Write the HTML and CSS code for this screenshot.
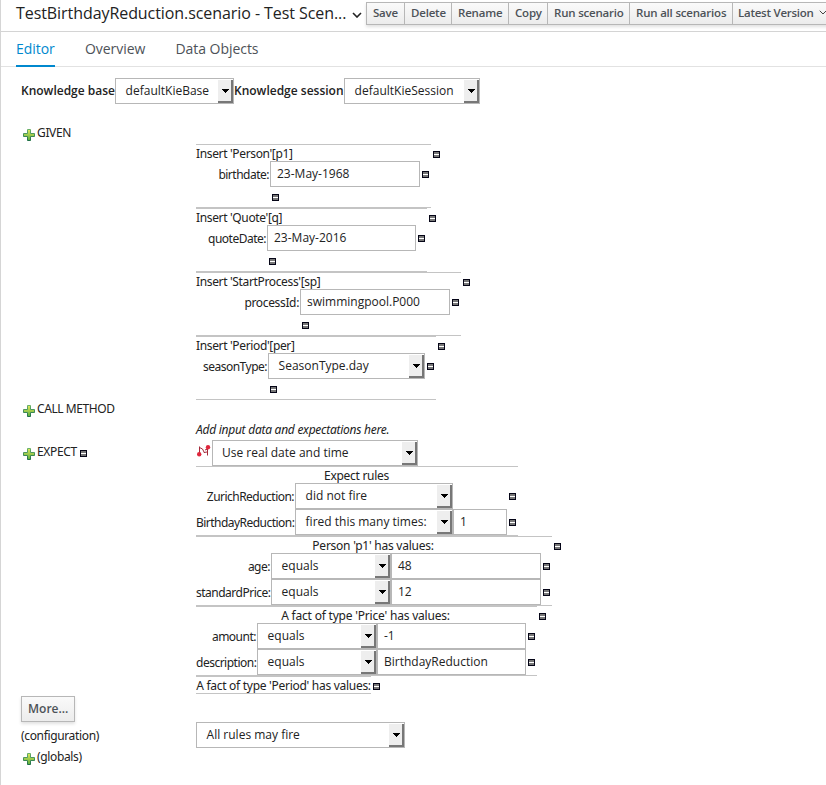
FILE: index.html
```html
<!DOCTYPE html>
<html lang="en">
<head>
<meta charset="utf-8">
<title>TestBirthdayReduction.scenario - Test Scenarios</title>
<link rel="stylesheet" href="styles.css">
</head>
<body>
<svg class="defs" aria-hidden="true">
  <defs>
    <linearGradient id="leaf" x1="0" y1="0" x2="0" y2="1"><stop offset="0" stop-color="#e4e85c"/><stop offset="1" stop-color="#58ad3c"/></linearGradient>
    <linearGradient id="edge" x1="0" y1="0" x2="0" y2="1"><stop offset="0" stop-color="#69b06a"/><stop offset="1" stop-color="#1f7048"/></linearGradient>
  </defs>
  <symbol id="plus" viewBox="0 0 12 12"><path d="M4.5 .5h3v4h4v3h-4v4h-3v-4h-4v-3h4z" fill="url(#leaf)" stroke="url(#edge)"/></symbol>
  <symbol id="minus" viewBox="0 0 7 7"><rect x=".5" y=".5" width="6" height="6" fill="#777" stroke="#050517"/><path d="M1 3.5h5" stroke="#fff"/></symbol>
  <symbol id="path" viewBox="0 0 15 12"><path d="M3.500 8V1.500M3.500 2.500l3 1.500 2 4M8 7.500l3-.5M11.500 3v7.500M9 5l2.500-1" fill="none" stroke="#a52a3a"/><circle cx="3.200" cy="9.300" r="2.200" fill="#e0263c"/><circle cx="12" cy="2.300" r="2.200" fill="#e0263c"/></symbol>
</svg>
<div class="page">
  <header class="bar">
    <h1 class="title">TestBirthdayReduction.scenario - Test Scen...</h1>
    <svg class="chev" viewBox="0 0 10 6"><path d="M1 1l4 4 4-4" fill="none" stroke="#222" stroke-width="1.600"/></svg>
    <div class="buttons">
      <span class="btn b1">Save</span><span class="btn b2">Delete</span><span class="btn b3">Rename</span><span class="btn b4">Copy</span><span class="btn b5">Run scenario</span><span class="btn b6">Run all scenarios</span><span class="btn b7">Latest Version<svg class="chev-s" viewBox="0 0 8 5"><path d="M.7.700l3.300 3.300 3.300-3.300" fill="none" stroke="#444"/></svg></span>
    </div>
  </header>
  <nav class="tabs"><span class="tab active">Editor</span><span class="tab t2">Overview</span><span class="tab t3">Data Objects</span></nav>
  <div class="kbar"><b class="kb">Knowledge base</b><span class="select s-base">defaultKieBase</span><b class="ks">Knowledge session</b><span class="select s-sess">defaultKieSession</span></div>

  <main class="form">
    <div class="cell given"><svg class="plus"><use href="#plus"/></svg><span>GIVEN</span></div><div></div>

    <div></div>
    <div>
      <section class="fact person"><div class="box">
        <div class="head">Insert 'Person'[p1]</div>
        <div class="row"><label>birthdate:</label><span class="input">23-May-1968</span><svg class="minus"><use href="#minus"/></svg></div>
        <div class="foot"><svg class="minus"><use href="#minus"/></svg></div>
      </div><svg class="minus"><use href="#minus"/></svg></section>
      <section class="fact quote"><div class="box">
        <div class="head">Insert 'Quote'[q]</div>
        <div class="row"><label>quoteDate:</label><span class="input">23-May-2016</span><svg class="minus"><use href="#minus"/></svg></div>
        <div class="foot"><svg class="minus"><use href="#minus"/></svg></div>
      </div><svg class="minus"><use href="#minus"/></svg></section>
      <section class="fact process"><div class="box">
        <div class="head">Insert 'StartProcess'[sp]</div>
        <div class="row"><label>processId:</label><span class="input">swimmingpool.P000</span><svg class="minus"><use href="#minus"/></svg></div>
        <div class="foot"><svg class="minus"><use href="#minus"/></svg></div>
      </div><svg class="minus"><use href="#minus"/></svg></section>
      <section class="fact period"><div class="box">
        <div class="head">Insert 'Period'[per]</div>
        <div class="row"><label>seasonType:</label><span class="select">SeasonType.day</span><svg class="minus"><use href="#minus"/></svg></div>
        <div class="foot"><svg class="minus"><use href="#minus"/></svg></div>
      </div><svg class="minus"><use href="#minus"/></svg></section>
    </div>

    <div class="cell call"><svg class="plus"><use href="#plus"/></svg><span>CALL METHOD</span></div><div></div>
    <div></div><div class="hint">Add input data and expectations here.</div>

    <div class="cell expect"><svg class="plus"><use href="#plus"/></svg><span>EXPECT</span><svg class="minus"><use href="#minus"/></svg></div>
    <div class="expectations">
      <div class="clock"><svg class="path"><use href="#path"/></svg><span class="select">Use real date and time</span></div>
      <section class="fact rules"><div class="box">
        <div class="head">Expect rules</div>
        <div class="row"><label>ZurichReduction:</label><span class="select">did not fire</span><span class="gap"></span><svg class="minus"><use href="#minus"/></svg></div>
        <div class="row"><label>BirthdayReduction:</label><span class="select">fired this many times:</span><span class="input">1</span><svg class="minus"><use href="#minus"/></svg></div>
      </div></section>
      <section class="fact values"><div class="box">
        <div class="head">Person 'p1' has values:</div>
        <div class="row"><label>age:</label><span class="select">equals</span><span class="input">48</span><svg class="minus"><use href="#minus"/></svg></div>
        <div class="row"><label>standardPrice:</label><span class="select">equals</span><span class="input">12</span><svg class="minus"><use href="#minus"/></svg></div>
      </div><svg class="minus"><use href="#minus"/></svg></section>
      <section class="fact price"><div class="box">
        <div class="head">A fact of type 'Price' has values:</div>
        <div class="row"><label>amount:</label><span class="select">equals</span><span class="input">-1</span><svg class="minus"><use href="#minus"/></svg></div>
        <div class="row"><label>description:</label><span class="select">equals</span><span class="input">BirthdayReduction</span><svg class="minus"><use href="#minus"/></svg></div>
      </div><svg class="minus"><use href="#minus"/></svg></section>
      <section class="fact empty"><div class="box"><div class="head">A fact of type 'Period' has values:</div></div><svg class="minus"><use href="#minus"/></svg></section>
    </div>

    <div class="more-row"><span class="more">More...</span></div><div></div>
    <div class="cell config">(configuration)</div><div class="firing"><span class="select">All rules may fire</span></div>
    <div class="cell globals"><svg class="plus"><use href="#plus"/></svg><span>(globals)</span></div><div></div>
  </main>
</div>
</body>
</html>
```
FILE: styles.css
```css
*, *::after { box-sizing: border-box; }
body { margin: 0; background: #fff; color: #222; font: 12px/16px "Noto Sans", "Open Sans", sans-serif; overflow: hidden; }
svg { display: block; flex: none; }
.defs { position: absolute; width: 0; height: 0; }
.page { height: 785px; border-left: 1px solid #d5d5d5; overflow: hidden; white-space: nowrap; font-family: "Open Sans", sans-serif; }

.bar { display: flex; height: 32px; border-bottom: 1px solid #d4d4d4; padding-left: 15px; }
.title { margin: 0; width: 336px; flex: none; font-size: 16px; line-height: 27px; font-weight: 400; letter-spacing: -.07px; color: #222; }
.chev { width: 10px; height: 6px; margin-top: 12px; }
.buttons { display: flex; height: 23px; margin: 2px 0 0 4px; box-shadow: 0 2px 3px rgba(0,0,0,.12); }
.btn { flex: none; display: flex; align-items: center; border: 1px solid #b7b7b7; border-right: 0; background: linear-gradient(#fafafa, #ececec); font-size: 11.5px; line-height: 15px; font-weight: 600; letter-spacing: -.2px; color: #4d5258; padding: 0 0 2px 6px; }
.b1 { width: 38px; } .b2 { width: 47px; } .b3 { width: 57px; } .b4 { width: 39px; } .b5 { width: 82px; } .b6 { width: 103px; } .b7 { width: 105px; padding-left: 5px; letter-spacing: -.25px; }
.chev-s { width: 8px; height: 5px; margin-left: 5px; }

.tabs { display: flex; height: 35px; padding-left: 15px; border-bottom: 1px solid #e2e2e2; font-size: 14px; line-height: 34px; letter-spacing: -.05px; color: #4d5258; }
.tab { width: 39px; height: 35px; }
.active { color: #0088ce; border-bottom: 2px solid #0088ce; }
.t2 { margin-left: 30px; width: 61px; }
.t3 { margin-left: 29.5px; width: 83px; }

.kbar { display: flex; align-items: center; height: 26px; margin: 11px 0 0 20px; }
.kbar b { font-weight: 600; font-size: 12px; }
.kb { width: 94px; } .ks { width: 110px; }
.s-base { width: 119px; } .s-sess { width: 136px; }

.select, .input { flex: none; height: 26px; border: 1px solid #b7b7b7; background: #fff; font-size: 12px; line-height: 23px; }
.input { padding-left: 6px; width: 150px; }
.select { display: flex; justify-content: space-between; padding-left: 9px; text-indent: .6px; }
.select::after { content: ""; flex: none; width: 15px; height: 23px; margin-top: 1px; border-right: 2px solid #777; border-bottom: 2px solid #777; background: linear-gradient(#000, #000) 4px 9px / 7px 1px no-repeat, linear-gradient(#000, #000) 5px 10px / 5px 1px no-repeat, linear-gradient(#000, #000) 6px 11px / 3px 1px no-repeat, linear-gradient(#000, #000) 7px 12px / 1px 1px no-repeat, #eee; }

.form { display: grid; grid-template-columns: 175px 1fr; margin: 20px 0 0 20px; }
.cell { font-family: "Noto Sans", sans-serif; display: flex; align-items: flex-start; letter-spacing: -.35px; }
.plus { width: 12px; height: 12px; margin: 5px 2px 0; }
.minus { width: 7px; height: 7px; }
.given { height: 20px; }
.given span, .expect span { margin-top: 1px; }
.call { height: 20px; padding-top: 1px; letter-spacing: -.43px; }
.call .plus { margin-top: 4px; }
.hint { font-family: "Noto Sans", sans-serif; height: 20px; padding-top: 2px; font-style: italic; letter-spacing: -.26px; }
.expect { padding-top: 3px; }
.expect .minus { margin: 7px 0 0 3px; }

.fact { display: flex; font-family: "Noto Sans", sans-serif; letter-spacing: -.35px; }
.box { flex: none; border: solid #c4c4c4; border-width: 1px 0; }
.fact > .minus { margin: 7px 0 0 2px; }
.head { height: 16px; line-height: 17px; }
.row { display: flex; height: 26px; align-items: center; }
.row label { flex: none; text-align: right; padding: 2px 1px 0 0; letter-spacing: -.5px; }
.row .select, .row .input { font-family: "Open Sans", sans-serif; letter-spacing: 0; }
.row .minus { margin-left: 2px; }
.foot { height: 20px; padding-top: 7px; }
.person .box { width: 235px; } .person label { width: 74px; } .person .foot { padding-left: 76px; }
.quote .box { width: 231px; } .quote label { width: 71px; } .quote .foot { padding-left: 73px; } .quote .input { width: 149px; }
.process .box { width: 265px; } .process label { width: 104px; letter-spacing: -.35px; } .process .foot { padding-left: 106px; }
.period .box { width: 240px; } .period label { width: 72px; } .period .foot { padding-left: 74px; } .period .select { width: 157px; }

.clock { display: flex; height: 26px; }
.path { width: 15px; height: 12px; margin: 5px 1px 0 0; }
.clock .select { width: 206px; text-indent: 0; }
.expectations .head { text-align: center; }
.rules .box { width: 322px; } .rules label { width: 99px; letter-spacing: -.53px; } .rules .select { width: 158px; } .rules .input, .gap { width: 54px; flex: none; }
.values .box { width: 356px; } .values .head { letter-spacing: -.25px; padding-right: 2px; } .values label { width: 75px; } .values .select { width: 120px; }
.price .box { width: 341px; } .price .head { letter-spacing: -.2px; padding-right: 2px; } .price label { width: 61px; } .price .select { width: 120px; } .price .input { width: 149px; }
.empty .box { width: 175px; } .empty .head { letter-spacing: -.28px; }
.rules .head { letter-spacing: -.3px; padding-right: 1px; }

.more-row { padding-top: 2px; height: 28px; }
.more { display: block; width: 54px; height: 26px; border: 1px solid #b7b7b7; background: linear-gradient(#fafafa, #ececec); box-shadow: 0 2px 3px rgba(0,0,0,.12); padding-left: 6px; font-size: 12px; line-height: 23px; font-weight: 600; color: #4d5258; }
.config { padding-top: 6px; }
.firing .select { width: 209px; }
.globals { padding-top: 1px; }
.globals .plus { margin-top: 4px; }
```
